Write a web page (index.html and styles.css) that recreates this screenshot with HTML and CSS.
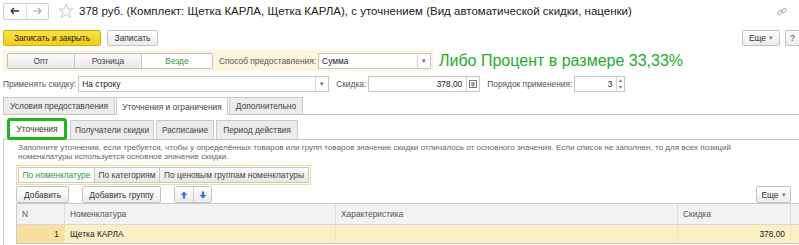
FILE: index.html
```html
<!DOCTYPE html>
<html lang="ru">
<head>
<meta charset="utf-8">
<link rel="stylesheet" href="styles.css">
</head>
<body>
<div class="page">
  <div class="titlebar">
    <div class="nav">
      <span class="nav-btn"><svg width="10" height="8" viewBox="0 0 10 8"><path d="M1 4H9M1 4L4 1M1 4L4 7" stroke="#333" stroke-width="1.4" fill="none"/></svg></span>
      <span class="nav-btn"><svg width="10" height="8" viewBox="0 0 10 8"><path d="M1 4H9M9 4L6 1M9 4L6 7" stroke="#aaa" stroke-width="1.2" fill="none"/></svg></span>
    </div>
    <svg class="star" width="16" height="16" viewBox="0 0 16 16"><path d="M8 1.2L10 6H15L11 9.2L12.6 14.6L8 11.4L3.4 14.6L5 9.2L1 6H6Z" fill="none" stroke="#c8c8c8" stroke-width="1"/></svg>
    <div class="title">378 руб. (Комплект: Щетка КАРЛА, Щетка КАРЛА), с уточнением (Вид автоматической скидки, наценки)</div>
    <svg class="link" width="12" height="12" viewBox="0 0 12 12"><g fill="none" stroke="#aaa" stroke-width="1"><rect x="1.5" y="5" width="5" height="3" rx="1.5" transform="rotate(-45 4 6.5)"/><rect x="5.5" y="3" width="5" height="3" rx="1.5" transform="rotate(-45 8 4.5)"/></g></svg>
  </div>

  <div class="cmdbar">
    <button class="btn primary">Записать и закрыть</button>
    <button class="btn">Записать</button>
    <div class="spacer"></div>
    <button class="btn more">Еще <span class="caret">▾</span></button>
    <button class="btn help">?</button>
  </div>

  <div class="row3">
    <div class="ypanel">
      <div class="seg">
        <span class="seg-item w66">Опт</span>
        <span class="seg-item w67">Розница</span>
        <span class="seg-item w71 active">Везде</span>
      </div>
      <span class="lbl gap6">Способ предоставления:</span>
      <div class="field w113">
        <span class="val">Сумма</span>
        <span class="ddbtn">▾</span>
      </div>
    </div>
    <div class="note">Либо Процент в размере 33,33%</div>
  </div>

  <div class="row4">
    <span class="lbl">Применять скидку:</span>
    <div class="field w251">
      <span class="val">На строку</span>
      <span class="ddbtn">▾</span>
    </div>
    <span class="lbl gap7">Скидка:</span>
    <div class="field w112">
      <span class="val right">378,00</span>
      <span class="ddbtn calc"><svg width="8" height="8" viewBox="0 0 8 8"><rect x="0.5" y="0.5" width="7" height="7" fill="none" stroke="#777"/><path d="M2 3H6M2 5H6M4 2V7" stroke="#777"/></svg></span>
    </div>
    <span class="lbl gap7">Порядок применения:</span>
    <div class="field w51">
      <span class="val right">3</span>
      <span class="spin"><span>▴</span><span>▾</span></span>
    </div>
  </div>

  <div class="tabs">
    <span class="tab w112">Условия предоставления</span>
    <span class="tab w112 active">Уточнения и ограничения</span>
    <span class="tab w74">Дополнительно</span>
  </div>

  <div class="subtabs">
    <span class="subtab hl">Уточнения</span>
    <span class="subtab w84">Получатели скидки</span>
    <span class="subtab w58">Расписание</span>
    <span class="subtab w82">Период действия</span>
  </div>

  <div class="content">
    <p class="hint">Заполните уточнения, если требуется, чтобы у определённых товаров или групп товаров значение скидки отличалось от основного значения. Если список не заполнен, то для всех позиций номенклатуры используется основное значение скидки.</p>

    <div class="filter">
      <span class="fbtn active w76">По номенклатуре</span>
      <span class="fbtn w66">По категориям</span>
      <span class="fbtn w148">По ценовым группам номенклатуры</span>
    </div>

    <div class="toolbar">
      <button class="btn w53">Добавить</button>
      <button class="btn w79 gap13">Добавить группу</button>
      <div class="arrows gap13">
        <span class="abtn"><svg width="8" height="8" viewBox="0 0 8 8"><path d="M4 0.5L7.5 4H5.2V7.5H2.8V4H0.5Z" fill="#2c7fd6"/></svg></span>
        <span class="abtn"><svg width="8" height="8" viewBox="0 0 8 8"><path d="M4 7.5L7.5 4H5.2V0.5H2.8V4H0.5Z" fill="#2c7fd6"/></svg></span>
      </div>
      <div class="spacer"></div>
      <button class="btn more2">Еще <span class="caret">▾</span></button>
    </div>

    <div class="table">
      <div class="trow head">
        <span class="c cn">N</span>
        <span class="c cnom">Номенклатура</span>
        <span class="c cchar">Характеристика</span>
        <span class="c cdisc">Скидка</span>
      </div>
      <div class="trow sel">
        <span class="c cn num">1</span>
        <span class="c cnom">Щетка КАРЛА</span>
        <span class="c cchar"></span>
        <span class="c cdisc num">378,00</span>
      </div>
    </div>
  </div>
</div>
</body>
</html>
```

FILE: styles.css
```css
* { box-sizing: border-box; }
html, body { margin: 0; padding: 0; background: #fff; }
body {
  font-family: "Liberation Sans", Arial, sans-serif;
  font-size: 8.4px;
  color: #333;
  width: 799px;
  height: 245px;
  overflow: hidden;
}
.page { padding: 0 0 0 3px; }
.spacer { flex: 1; }

/* title */
.titlebar { display: flex; align-items: center; height: 20px; margin-top: 1px; }
.nav { display: flex; border: 1px solid #cfcfcf; border-radius: 2px; height: 17px; width: 46px; background: #fff; }
.nav-btn { flex: 1; display: flex; align-items: center; justify-content: center; }
.nav-btn + .nav-btn { border-left: 1px solid #dcdcdc; }
.star { margin-left: 9px; }
.title { margin-left: 5px; font-size: 11.5px; color: #222; white-space: nowrap; }
.link { margin-left: auto; margin-right: 11px; margin-top: 1px; }

/* buttons */
.btn {
  font-family: inherit; font-size: 8.4px; color: #333;
  height: 16px; padding: 0 7px; border: 1px solid #c3c3c3; border-radius: 2px;
  background: linear-gradient(#ffffff, #ececec);
  display: inline-flex; align-items: center; justify-content: center; white-space: nowrap;
}
.cmdbar { display: flex; align-items: center; margin-top: 9px; height: 16px; }
.btn.primary { background: linear-gradient(#fbe14a, #f3cd16); border-color: #d6b200; color: #222; width: 98px; }
.cmdbar .btn + .btn { margin-left: 6px; }
.cmdbar .btn:nth-child(2) { width: 51px; }
.btn.more { width: 38px; padding: 0 4px; }
.cmdbar .btn.more { margin-left: 0; }
.cmdbar .btn.help { margin-left: 5px; width: 14px; flex: none; padding: 0; justify-content: flex-start; padding-left: 4px; border-right: none; border-radius: 2px 0 0 2px; }
.caret { font-size: 7px; color: #777; margin-left: 3px; }

/* row 3 */
.row3 { display: flex; align-items: center; margin-top: 4px; height: 21px; }
.ypanel { display: flex; align-items: center; background: #fdf6dc; height: 21px; width: 430px; padding-left: 4px; flex: none; }
.seg { display: flex; height: 16px; border: 1px solid #bdbdbd; border-radius: 2px; overflow: hidden; }
.seg-item { display: flex; align-items: center; justify-content: center; background: linear-gradient(#fafafa, #e8e8e8); color: #444; }
.seg-item + .seg-item { border-left: 1px solid #c6c6c6; }
.seg-item.active { background: #fff; color: #2a9d3c; }
.w66 { width: 66px; } .w67 { width: 67px; } .w71 { width: 71px; }
.lbl { color: #555; white-space: nowrap; }
.gap6 { margin-left: 6px; } .gap7 { margin-left: 7px; } .gap13 { margin-left: 13px; }
.field { display: flex; height: 16px; border: 1px solid #c6c6c6; background: #fff; margin-left: 2px; flex: none; }
.field .val { flex: 1; display: flex; align-items: center; padding: 0 3px; color: #222; }
.field .val.right { justify-content: flex-end; padding-right: 4px; }
.ddbtn { width: 13px; border-left: 1px solid #d3d3d3; display: flex; align-items: center; justify-content: center; font-size: 7px; color: #666; }
.w113 { width: 113px; } .w251 { width: 251px; } .w112 { width: 112px; } .w51 { width: 51px; }
.spin { width: 8px; border-left: 1px solid #d3d3d3; display: flex; flex-direction: column; font-size: 6px; color: #777; line-height: 7px; align-items: center; }
.note { margin-left: 6px; font-size: 16px; color: #22ad2a; white-space: nowrap; }

/* row 4 */
.row4 { display: flex; align-items: center; margin-top: 5px; height: 16px; }

/* tabs */
.tabs { display: flex; margin-top: 5px; height: 18px; border-bottom: 1px solid #c4c4c4; align-items: flex-end; }
.tab { height: 17px; display: flex; align-items: center; justify-content: center; background: #ececec; border: 1px solid #c9c9c9; border-bottom: none; margin-right: 1px; color: #444; white-space: nowrap; }
.tab.active { background: #fff; height: 18px; margin-bottom: -1px; }
.w74 { width: 74px; }

.subtabs { display: flex; align-items: flex-end; height: 23px; border-bottom: 1px solid #c4c4c4; padding-left: 4px; margin-top: 2px; }
.subtab { height: 19px; display: flex; align-items: center; justify-content: center; background: #ececec; border: 1px solid #c9c9c9; border-bottom: none; margin-right: 2px; color: #444; white-space: nowrap; }
.subtab.hl { width: 60px; height: 22px; background: #fff; border: 3px solid #21b41c; border-radius: 3px; margin-bottom: -1px; margin-right: 3px; color: #333; }
.w84 { width: 84px; } .w58 { width: 58px; } .w82 { width: 82px; }

/* content */
.content { border-left: 1px solid #d0d0d0; margin-left: 0; padding-left: 12px; height: 110px; }
.hint { margin: 0; padding: 3px 40px 0 2px; color: #666; font-size: 8.1px; line-height: 9px; }
.filter { display: inline-flex; margin-top: 4px; border: 1px solid #f1dd8d; padding: 1px; background: #fff; }
.fbtn { height: 16px; display: flex; align-items: center; justify-content: center; background: linear-gradient(#fafafa, #e8e8e8); border: 1px solid #c6c6c6; margin-left: -1px; color: #444; white-space: nowrap; }
.fbtn:first-child { margin-left: 0; }
.fbtn.active { background: #fff; color: #2a9d3c; }
.w76 { width: 77px; } .w148 { width: 150px; }
.toolbar { display: flex; align-items: center; margin-top: 1px; height: 17px; padding-right: 8px; }
.toolbar .btn { height: 17px; }
.w53 { width: 53px; } .w79 { width: 79px; }
.arrows { display: flex; border: 1px solid #c3c3c3; border-radius: 2px; height: 17px; }
.abtn { width: 18px; display: flex; align-items: center; justify-content: center; background: linear-gradient(#ffffff, #ececec); }
.abtn + .abtn { border-left: 1px solid #d0d0d0; }
.btn.more2 { width: 35px; padding: 0 3px; }

.table { margin-top: 0; border: 1px solid #c8c8c8; border-right: none; }
.trow { display: flex; height: 18px; }
.trow.head { background: #f2f2f2; height: 21px; border-bottom: 1px solid #d8d8d8; }
.c { display: flex; align-items: center; padding: 0 5px; white-space: nowrap; }
.head .c { color: #555; border-right: 1px solid #dcdcdc; }
.cn { width: 48px; } .cnom { width: 271px; } .cchar { width: 342px; } .cdisc { width: 113px; }
.sel { background: #fbefc6; }
.sel .c { border-right: 1px solid #f4e4b0; color: #222; }
.sel .cn { background: #f8e1a0; }
.num { justify-content: flex-end; }
```
